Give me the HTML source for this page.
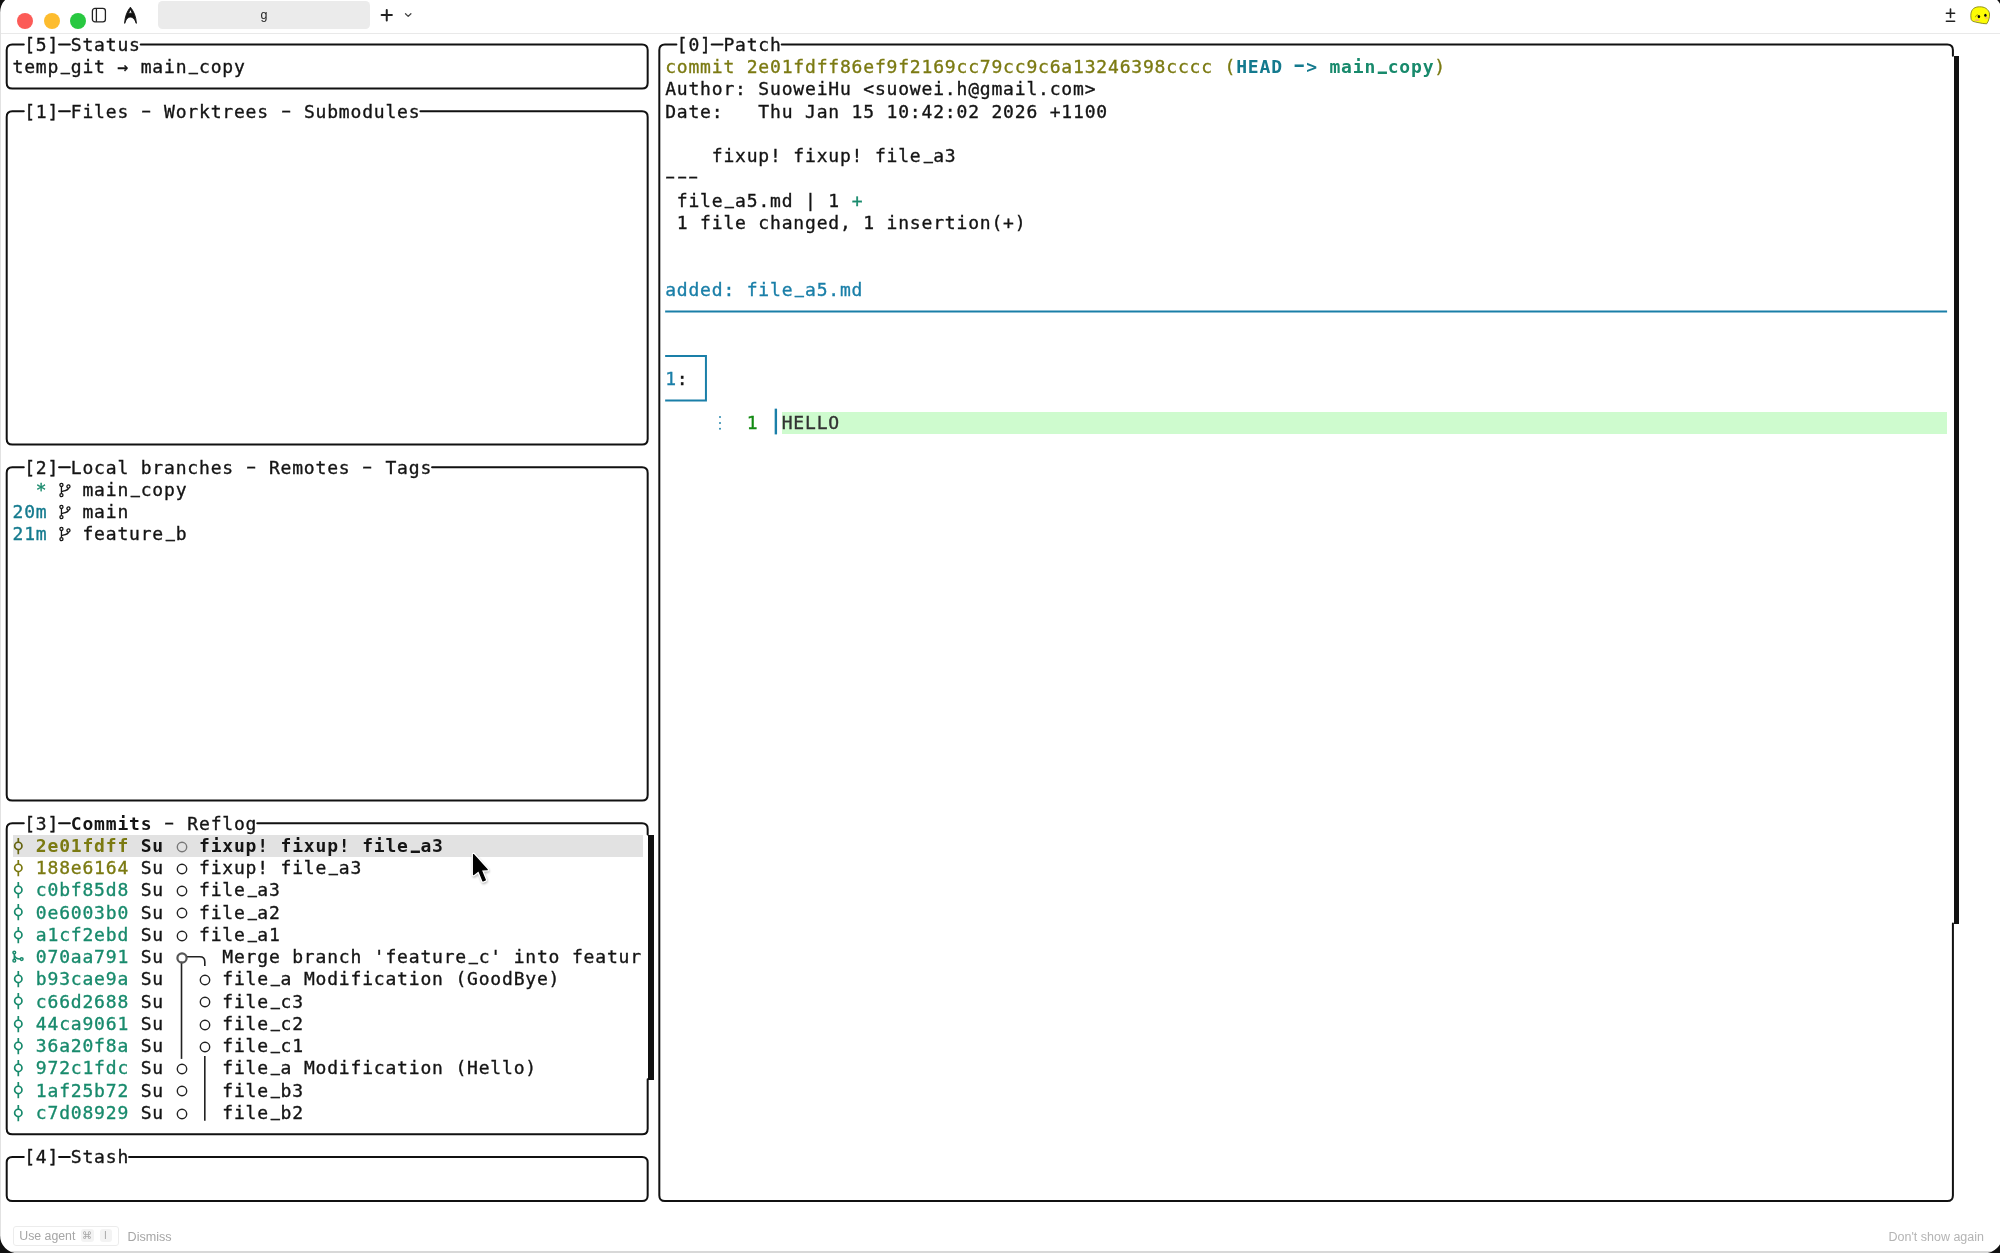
<!DOCTYPE html>
<html lang="en"><head><meta charset="utf-8"><title>g</title>
<style>
html,body{margin:0;padding:0;background:#fff}
body{width:2000px;height:1253px;position:relative;overflow:hidden;font-family:"Liberation Sans","DejaVu Sans",sans-serif}
.r{position:absolute;white-space:pre;font-family:"DejaVu Sans Mono","Liberation Mono",monospace;font-size:18px;line-height:22px;height:22px;letter-spacing:0.817px;color:#141414;-webkit-text-stroke:0.35px currentColor}
.b{font-weight:bold;-webkit-text-stroke:0}
.o{color:#7b7a12}.g{color:#188a6c}.c{color:#147a8e}.bl{color:#1a7fa8}.lg{color:#138a13}.dk{color:#333}.f{color:#141414}
.ic{position:absolute;overflow:visible}
.hy{display:inline-block;transform:translateY(-2px) scaleX(1.65)}
.us{display:inline-block;transform-origin:46% 94%;transform:translate(0.9px,-3.1px) scale(0.85,1.5)}
#lines{position:absolute;left:0;top:0}
</style></head><body>
<div id="app" style="position:absolute;left:0;top:0;width:2000px;height:1253px;will-change:transform">
<div id="titlebar" style="position:absolute;left:0;top:0;width:2000px;height:33px;background:#fff"></div>
<div style="position:absolute;left:0;top:33px;width:2000px;height:1.2px;background:#e9e9e9"></div>
<div style="position:absolute;left:17.2px;top:13.1px;width:16px;height:16px;border-radius:50%;background:#fc5b57"></div>
<div style="position:absolute;left:43.5px;top:13.1px;width:16px;height:16px;border-radius:50%;background:#fdbc2e"></div>
<div style="position:absolute;left:69.8px;top:13.1px;width:16px;height:16px;border-radius:50%;background:#28c840"></div>
<svg style="position:absolute;left:90px;top:6px" width="18" height="18" viewBox="0 0 18 18" fill="none" stroke="#222" stroke-width="1.3"><rect x="2.4" y="2.4" width="13" height="13.4" rx="2.6"/><path d="M6.4 2.4V15.8"/></svg>
<svg style="position:absolute;left:0;top:0" width="200" height="33" viewBox="0 0 200 33"><path fill="#111" stroke="#111" stroke-width="0.9" stroke-linejoin="round" fill-rule="evenodd" d="M130.4 7.2C133.2 10.6 136.2 16.4 136.3 23.4C135 19.6 133 17.1 130.4 17.1C127.8 17.1 125.8 19.6 124.7 23.4C124.8 16.4 127.6 10.6 130.4 7.2ZM130.4 9.3L128.5 13.2L132.3 13.2Z"/></svg>
<div style="position:absolute;left:158.2px;top:1.2px;width:211.5px;height:27.4px;border-radius:4.5px;background:#ebebeb"></div>
<div style="position:absolute;left:158.2px;top:1.2px;width:211.5px;height:27.4px;line-height:28px;text-align:center;font-size:12.5px;color:#222">g</div>
<svg style="position:absolute;left:378px;top:6px" width="40" height="18" viewBox="0 0 40 18" fill="none"><path d="M3.6 9H13.9M8.75 4.1V14.4" stroke="#222" stroke-width="2" stroke-linecap="round"/><path d="M27.5 7.7L30.2 10.4L32.9 7.7" stroke="#444" stroke-width="1.3" stroke-linecap="round" stroke-linejoin="round"/></svg>
<svg style="position:absolute;left:1942px;top:5px" width="18" height="20" viewBox="0 0 18 20" fill="none" stroke="#222" stroke-width="1.6" stroke-linecap="round"><path d="M4.4 8.3H12.6M8.5 4.1V12.5M4.4 16.2H12.6"/></svg>
<svg style="position:absolute;left:1968px;top:4px" width="24" height="24" viewBox="0 0 24 24"><path d="M2.8 11.75C2.8 8 4 5.6 5.75 4.4C7.5 3.2 9.5 2.8 11.7 2.8C14 2.8 16.3 3.2 18 4.4C20 5.8 21.5 7.8 21.5 10C21.6 11.5 21.5 12.8 21.15 14.2C20.7 16.3 19.9 18.2 18.7 19.8C16 19.8 13.5 19.3 11 18.75C8.8 18.3 6.8 18 5.05 17.35C3.8 16.7 3.2 15.8 3.1 14.9C2.9 13.9 2.8 12.8 2.8 11.75Z" fill="#fdfd04" stroke="#84841c" stroke-width="0.9"/><ellipse cx="10.9" cy="12.6" rx="1.25" ry="1.6" fill="#050510"/><ellipse cx="17.4" cy="11.2" rx="1.2" ry="1.5" fill="#050510"/><ellipse cx="9.2" cy="16.2" rx="2.4" ry="0.9" fill="#f6b870"/><ellipse cx="18.3" cy="13.9" rx="1.6" ry="0.9" fill="#f6b870"/><path d="M7.4 13.2C7.8 11.6 8.8 10.8 10 10.8" stroke="#8a7a10" stroke-width="0.8" fill="none"/></svg>

<svg id="lines" width="2000" height="1253" viewBox="0 0 2000 1253" fill="none">
<path d="M140.72 44.52H642.07Q647.67 44.52 647.67 50.12V82.93Q647.67 88.53 642.07 88.53H12.30Q6.70 88.53 6.70 82.93V50.12Q6.70 44.52 12.30 44.52H23.78M59.04 44.52H69.89" stroke="#111" stroke-width="2" fill="none" stroke-linecap="round"/>
<path d="M420.41 111.28H642.07Q647.67 111.28 647.67 116.88V438.92Q647.67 444.52 642.07 444.52H12.30Q6.70 444.52 6.70 438.92V116.88Q6.70 111.28 12.30 111.28H23.78M59.04 111.28H69.89" stroke="#111" stroke-width="2" fill="none" stroke-linecap="round"/>
<path d="M432.07 467.27H642.07Q647.67 467.27 647.67 472.88V794.92Q647.67 800.52 642.07 800.52H12.30Q6.70 800.52 6.70 794.92V472.88Q6.70 467.27 12.30 467.27H23.78M59.04 467.27H69.89" stroke="#111" stroke-width="2" fill="none" stroke-linecap="round"/>
<path d="M257.26 823.27H642.07Q647.67 823.27 647.67 828.88V834.40M647.67 1079.15V1128.68Q647.67 1134.28 642.07 1134.28H12.30Q6.70 1134.28 6.70 1128.68V828.88Q6.70 823.27 12.30 823.27H23.78M59.04 823.27H69.89" stroke="#111" stroke-width="2" fill="none" stroke-linecap="round"/>
<path d="M129.06 1157.03H642.07Q647.67 1157.03 647.67 1162.62V1195.43Q647.67 1201.03 642.07 1201.03H12.30Q6.70 1201.03 6.70 1195.43V1162.62Q6.70 1157.03 12.30 1157.03H23.78M59.04 1157.03H69.89" stroke="#111" stroke-width="2" fill="none" stroke-linecap="round"/>
<path d="M781.69 44.52H1947.32Q1952.91 44.52 1952.91 50.12V55.65M1952.91 923.40V1195.43Q1952.91 1201.03 1947.32 1201.03H664.92Q659.32 1201.03 659.32 1195.43V50.12Q659.32 44.52 664.92 44.52H676.40M711.66 44.52H722.52" stroke="#111" stroke-width="2" fill="none" stroke-linecap="round"/>
<path d="M186.51 956.77H199.81Q204.81 956.77 204.81 961.77V965.90" stroke="#222" stroke-width="1.6" fill="none"/>
<path d="M181.51 961.65V1058.90" stroke="#222" stroke-width="1.6"/>
<path d="M204.81 1055.90V1120.65" stroke="#222" stroke-width="1.6"/>
<path d="M665.15 311.52H1947.09" stroke="#1a7fa8" stroke-width="2"/>
<path d="M665.15 356.02H705.94V400.52H665.15" stroke="#1a7fa8" stroke-width="2" fill="none"/>
<path d="M775.86 408.65V434.40" stroke="#1a7fa8" stroke-width="2.4"/>
<circle cx="720.00" cy="417.07" r="0.95" fill="#1a7fa8"/>
<circle cx="720.00" cy="423.07" r="0.95" fill="#1a7fa8"/>
<circle cx="720.00" cy="428.77" r="0.95" fill="#1a7fa8"/>
</svg>
<div class="r" style="left:24.18px;top:34px;">[5]</div>
<div class="r" style="left:70.79px;top:34px;">Status</div>
<div class="r" style="left:12.52px;top:56px;">temp<span class="us">_</span>git → main<span class="us">_</span>copy</div>
<div class="r" style="left:24.18px;top:101px;">[1]</div>
<div class="r" style="left:70.79px;top:101px;">Files <span class="hy">-</span> Worktrees <span class="hy">-</span> Submodules</div>
<div class="r" style="left:24.18px;top:457px;">[2]</div>
<div class="r" style="left:70.79px;top:457px;">Local branches <span class="hy">-</span> Remotes <span class="hy">-</span> Tags</div>
<div style="position:absolute;left:648.37px;top:834.80px;width:5.3px;height:244.75px;background:#111"></div>
<div class="r" style="left:24.18px;top:813px;">[3]</div>
<div class="r" style="left:70.79px;top:813px;"><span class="b">Commits</span> <span class="hy">-</span> Reflog</div>
<div class="r" style="left:24.18px;top:1146px;">[4]</div>
<div class="r" style="left:70.79px;top:1146px;">Stash</div>
<div style="position:absolute;left:1953.62px;top:56.05px;width:5.3px;height:867.75px;background:#111"></div>
<div class="r" style="left:676.80px;top:34px;">[0]</div>
<div class="r" style="left:723.42px;top:34px;">Patch</div>
<div class="r" style="left:35.83px;top:479px;"><span class="g">*</span></div>
<svg class="ic" style="left:57.97px;top:480.52px" width="14" height="18" viewBox="0 0 14 18"><g fill="none" stroke="#141414" stroke-width="1.3"><circle cx="3.45" cy="3.9" r="1.55"/><circle cx="3.45" cy="14.1" r="1.55"/><circle cx="10.45" cy="5.5" r="1.55"/><path d="M3.45 5.4V12.6M10.45 7.1C10.3 9.3 7.5 9.6 3.8 10.4"/></g></svg>
<div class="r" style="left:82.45px;top:479px;">main<span class="us">_</span>copy</div>
<div class="r" style="left:12.52px;top:501px;"><span class="c">20m</span></div>
<svg class="ic" style="left:57.97px;top:502.77px" width="14" height="18" viewBox="0 0 14 18"><g fill="none" stroke="#141414" stroke-width="1.3"><circle cx="3.45" cy="3.9" r="1.55"/><circle cx="3.45" cy="14.1" r="1.55"/><circle cx="10.45" cy="5.5" r="1.55"/><path d="M3.45 5.4V12.6M10.45 7.1C10.3 9.3 7.5 9.6 3.8 10.4"/></g></svg>
<div class="r" style="left:82.45px;top:501px;">main</div>
<div class="r" style="left:12.52px;top:523px;"><span class="c">21m</span></div>
<svg class="ic" style="left:57.97px;top:525.02px" width="14" height="18" viewBox="0 0 14 18"><g fill="none" stroke="#141414" stroke-width="1.3"><circle cx="3.45" cy="3.9" r="1.55"/><circle cx="3.45" cy="14.1" r="1.55"/><circle cx="10.45" cy="5.5" r="1.55"/><path d="M3.45 5.4V12.6M10.45 7.1C10.3 9.3 7.5 9.6 3.8 10.4"/></g></svg>
<div class="r" style="left:82.45px;top:523px;">feature<span class="us">_</span>b</div>
<div style="position:absolute;left:12.52px;top:835.40px;width:630.32px;height:22.00px;background:#e2e2e2"></div>
<svg class="ic" style="left:12.35px;top:834.52px" width="12" height="22" viewBox="0 0 12 22"><g fill="none" stroke="#65640f" stroke-width="1.7"><circle cx="6.3" cy="10.9" r="3.65"/><path d="M6.3 3V7.2M6.3 14.6V19.3"/></g></svg>
<div class="r" style="left:35.83px;top:835px;"><span class="o b">2e01fdff</span></div>
<div class="r" style="left:140.72px;top:835px;"><span class="f b">Su</span></div>
<svg class="ic" style="left:175.51px;top:840.52px" width="12" height="12" viewBox="0 0 12 12"><circle cx="6" cy="6" r="4.7" fill="none" stroke="#777" stroke-width="1.4"/></svg>
<div class="r" style="left:198.99px;top:835px;"><span class="f b">fixup! fixup! file<span class="us">_</span>a3</span></div>
<svg class="ic" style="left:12.35px;top:856.77px" width="12" height="22" viewBox="0 0 12 22"><g fill="none" stroke="#7b7a12" stroke-width="1.7"><circle cx="6.3" cy="10.9" r="3.65"/><path d="M6.3 3V7.2M6.3 14.6V19.3"/></g></svg>
<div class="r" style="left:35.83px;top:857px;"><span class="o">188e6164</span></div>
<div class="r" style="left:140.72px;top:857px;"><span class="f">Su</span></div>
<svg class="ic" style="left:175.51px;top:862.77px" width="12" height="12" viewBox="0 0 12 12"><circle cx="6" cy="6" r="4.7" fill="none" stroke="#222" stroke-width="1.4"/></svg>
<div class="r" style="left:198.99px;top:857px;"><span class="f">fixup! file<span class="us">_</span>a3</span></div>
<svg class="ic" style="left:12.35px;top:879.02px" width="12" height="22" viewBox="0 0 12 22"><g fill="none" stroke="#188a6c" stroke-width="1.7"><circle cx="6.3" cy="10.9" r="3.65"/><path d="M6.3 3V7.2M6.3 14.6V19.3"/></g></svg>
<div class="r" style="left:35.83px;top:879px;"><span class="g">c0bf85d8</span></div>
<div class="r" style="left:140.72px;top:879px;"><span class="f">Su</span></div>
<svg class="ic" style="left:175.51px;top:885.02px" width="12" height="12" viewBox="0 0 12 12"><circle cx="6" cy="6" r="4.7" fill="none" stroke="#222" stroke-width="1.4"/></svg>
<div class="r" style="left:198.99px;top:879px;"><span class="f">file<span class="us">_</span>a3</span></div>
<svg class="ic" style="left:12.35px;top:901.27px" width="12" height="22" viewBox="0 0 12 22"><g fill="none" stroke="#188a6c" stroke-width="1.7"><circle cx="6.3" cy="10.9" r="3.65"/><path d="M6.3 3V7.2M6.3 14.6V19.3"/></g></svg>
<div class="r" style="left:35.83px;top:902px;"><span class="g">0e6003b0</span></div>
<div class="r" style="left:140.72px;top:902px;"><span class="f">Su</span></div>
<svg class="ic" style="left:175.51px;top:907.27px" width="12" height="12" viewBox="0 0 12 12"><circle cx="6" cy="6" r="4.7" fill="none" stroke="#222" stroke-width="1.4"/></svg>
<div class="r" style="left:198.99px;top:902px;"><span class="f">file<span class="us">_</span>a2</span></div>
<svg class="ic" style="left:12.35px;top:923.52px" width="12" height="22" viewBox="0 0 12 22"><g fill="none" stroke="#188a6c" stroke-width="1.7"><circle cx="6.3" cy="10.9" r="3.65"/><path d="M6.3 3V7.2M6.3 14.6V19.3"/></g></svg>
<div class="r" style="left:35.83px;top:924px;"><span class="g">a1cf2ebd</span></div>
<div class="r" style="left:140.72px;top:924px;"><span class="f">Su</span></div>
<svg class="ic" style="left:175.51px;top:929.52px" width="12" height="12" viewBox="0 0 12 12"><circle cx="6" cy="6" r="4.7" fill="none" stroke="#222" stroke-width="1.4"/></svg>
<div class="r" style="left:198.99px;top:924px;"><span class="f">file<span class="us">_</span>a1</span></div>
<svg class="ic" style="left:11.35px;top:945.77px" width="14" height="22" viewBox="0 0 14 22"><g fill="none" stroke="#188a6c" stroke-width="1.5"><circle cx="3.3" cy="6.6" r="1.35"/><circle cx="3.3" cy="14.7" r="1.35"/><circle cx="10.7" cy="13.1" r="1.35"/><path d="M3.3 8V13.3M3.3 8.4C3.5 11.4 6 13.1 9.3 13.1"/></g></svg>
<div class="r" style="left:35.83px;top:946px;"><span class="g">070aa791</span></div>
<div class="r" style="left:140.72px;top:946px;"><span class="f">Su</span></div>
<svg class="ic" style="left:175.51px;top:951.77px" width="12" height="12" viewBox="0 0 12 12"><circle cx="6" cy="6" r="4.6" fill="none" stroke="#555" stroke-width="2.2"/></svg>
<div class="r" style="left:222.30px;top:946px;">Merge branch &#x27;feature<span class="us">_</span>c&#x27; into featur</div>
<svg class="ic" style="left:12.35px;top:968.02px" width="12" height="22" viewBox="0 0 12 22"><g fill="none" stroke="#188a6c" stroke-width="1.7"><circle cx="6.3" cy="10.9" r="3.65"/><path d="M6.3 3V7.2M6.3 14.6V19.3"/></g></svg>
<div class="r" style="left:35.83px;top:968px;"><span class="g">b93cae9a</span></div>
<div class="r" style="left:140.72px;top:968px;"><span class="f">Su</span></div>
<svg class="ic" style="left:198.81px;top:974.02px" width="12" height="12" viewBox="0 0 12 12"><circle cx="6" cy="6" r="4.7" fill="none" stroke="#222" stroke-width="1.4"/></svg>
<div class="r" style="left:222.30px;top:968px;">file<span class="us">_</span>a Modification (GoodBye)</div>
<svg class="ic" style="left:12.35px;top:990.27px" width="12" height="22" viewBox="0 0 12 22"><g fill="none" stroke="#188a6c" stroke-width="1.7"><circle cx="6.3" cy="10.9" r="3.65"/><path d="M6.3 3V7.2M6.3 14.6V19.3"/></g></svg>
<div class="r" style="left:35.83px;top:991px;"><span class="g">c66d2688</span></div>
<div class="r" style="left:140.72px;top:991px;"><span class="f">Su</span></div>
<svg class="ic" style="left:198.81px;top:996.27px" width="12" height="12" viewBox="0 0 12 12"><circle cx="6" cy="6" r="4.7" fill="none" stroke="#222" stroke-width="1.4"/></svg>
<div class="r" style="left:222.30px;top:991px;">file<span class="us">_</span>c3</div>
<svg class="ic" style="left:12.35px;top:1012.52px" width="12" height="22" viewBox="0 0 12 22"><g fill="none" stroke="#188a6c" stroke-width="1.7"><circle cx="6.3" cy="10.9" r="3.65"/><path d="M6.3 3V7.2M6.3 14.6V19.3"/></g></svg>
<div class="r" style="left:35.83px;top:1013px;"><span class="g">44ca9061</span></div>
<div class="r" style="left:140.72px;top:1013px;"><span class="f">Su</span></div>
<svg class="ic" style="left:198.81px;top:1018.52px" width="12" height="12" viewBox="0 0 12 12"><circle cx="6" cy="6" r="4.7" fill="none" stroke="#222" stroke-width="1.4"/></svg>
<div class="r" style="left:222.30px;top:1013px;">file<span class="us">_</span>c2</div>
<svg class="ic" style="left:12.35px;top:1034.78px" width="12" height="22" viewBox="0 0 12 22"><g fill="none" stroke="#188a6c" stroke-width="1.7"><circle cx="6.3" cy="10.9" r="3.65"/><path d="M6.3 3V7.2M6.3 14.6V19.3"/></g></svg>
<div class="r" style="left:35.83px;top:1035px;"><span class="g">36a20f8a</span></div>
<div class="r" style="left:140.72px;top:1035px;"><span class="f">Su</span></div>
<svg class="ic" style="left:198.81px;top:1040.78px" width="12" height="12" viewBox="0 0 12 12"><circle cx="6" cy="6" r="4.7" fill="none" stroke="#222" stroke-width="1.4"/></svg>
<div class="r" style="left:222.30px;top:1035px;">file<span class="us">_</span>c1</div>
<svg class="ic" style="left:12.35px;top:1057.03px" width="12" height="22" viewBox="0 0 12 22"><g fill="none" stroke="#188a6c" stroke-width="1.7"><circle cx="6.3" cy="10.9" r="3.65"/><path d="M6.3 3V7.2M6.3 14.6V19.3"/></g></svg>
<div class="r" style="left:35.83px;top:1057px;"><span class="g">972c1fdc</span></div>
<div class="r" style="left:140.72px;top:1057px;"><span class="f">Su</span></div>
<svg class="ic" style="left:175.51px;top:1063.03px" width="12" height="12" viewBox="0 0 12 12"><circle cx="6" cy="6" r="4.7" fill="none" stroke="#222" stroke-width="1.4"/></svg>
<div class="r" style="left:222.30px;top:1057px;">file<span class="us">_</span>a Modification (Hello)</div>
<svg class="ic" style="left:12.35px;top:1079.28px" width="12" height="22" viewBox="0 0 12 22"><g fill="none" stroke="#188a6c" stroke-width="1.7"><circle cx="6.3" cy="10.9" r="3.65"/><path d="M6.3 3V7.2M6.3 14.6V19.3"/></g></svg>
<div class="r" style="left:35.83px;top:1080px;"><span class="g">1af25b72</span></div>
<div class="r" style="left:140.72px;top:1080px;"><span class="f">Su</span></div>
<svg class="ic" style="left:175.51px;top:1085.28px" width="12" height="12" viewBox="0 0 12 12"><circle cx="6" cy="6" r="4.7" fill="none" stroke="#222" stroke-width="1.4"/></svg>
<div class="r" style="left:222.30px;top:1080px;">file<span class="us">_</span>b3</div>
<svg class="ic" style="left:12.35px;top:1101.53px" width="12" height="22" viewBox="0 0 12 22"><g fill="none" stroke="#188a6c" stroke-width="1.7"><circle cx="6.3" cy="10.9" r="3.65"/><path d="M6.3 3V7.2M6.3 14.6V19.3"/></g></svg>
<div class="r" style="left:35.83px;top:1102px;"><span class="g">c7d08929</span></div>
<div class="r" style="left:140.72px;top:1102px;"><span class="f">Su</span></div>
<svg class="ic" style="left:175.51px;top:1107.53px" width="12" height="12" viewBox="0 0 12 12"><circle cx="6" cy="6" r="4.7" fill="none" stroke="#222" stroke-width="1.4"/></svg>
<div class="r" style="left:222.30px;top:1102px;">file<span class="us">_</span>b2</div>
<div class="r" style="left:665.15px;top:56px;"><span class="o">commit 2e01fdff86ef9f2169cc79cc9c6a13246398cccc (</span><span class="c b">HEAD <span class="hy">-</span>&gt; </span><span class="g b">main<span class="us">_</span>copy</span><span class="o">)</span></div>
<div class="r" style="left:665.15px;top:78px;">Author: SuoweiHu &lt;suowei.h@gmail.com&gt;</div>
<div class="r" style="left:665.15px;top:101px;">Date:   Thu Jan 15 10:42:02 2026 +1100</div>
<div class="r" style="left:665.15px;top:145px;">    fixup! fixup! file<span class="us">_</span>a3</div>
<div class="r" style="left:665.15px;top:167px;"><span class="hy">-</span><span class="hy">-</span><span class="hy">-</span></div>
<div class="r" style="left:665.15px;top:190px;"> file<span class="us">_</span>a5.md | 1 <span class="g">+</span></div>
<div class="r" style="left:665.15px;top:212px;"> 1 file changed, 1 insertion(+)</div>
<div class="r" style="left:665.15px;top:279px;"><span class="bl">added: file<span class="us">_</span>a5.md</span></div>
<div class="r" style="left:665.15px;top:368px;"><span class="bl">1</span>:</div>
<div style="position:absolute;left:781.69px;top:411.65px;width:1165.40px;height:22.25px;background:#cefbce"></div>
<div class="r" style="left:746.73px;top:412px;"><span class="lg">1</span></div>
<div class="r" style="left:781.69px;top:412px;"><span class="dk">HELLO</span></div>
<div style="position:absolute;left:12.5px;top:1226px;width:106px;height:19.5px;border:1px solid #ececec;border-radius:3px;box-sizing:border-box"></div>
<div style="position:absolute;left:19.3px;top:1227px;height:19px;line-height:19px;font-size:12.3px;color:#a6a6a6;white-space:pre">Use agent</div>
<div style="position:absolute;left:80.5px;top:1229px;width:13px;height:13px;border-radius:3px;background:#f3f3f3"></div>
<div style="position:absolute;left:99.5px;top:1229px;width:12px;height:13px;border-radius:3px;background:#f3f3f3"></div>
<div style="position:absolute;left:80.5px;top:1229px;width:13px;height:13px;line-height:13px;text-align:center;font-size:10px;color:#a6a6a6;font-family:'DejaVu Sans',sans-serif">⌘</div>
<div style="position:absolute;left:99.5px;top:1229px;width:12px;height:13px;line-height:13px;text-align:center;font-size:10px;color:#a6a6a6">I</div>
<div style="position:absolute;left:127.6px;top:1228px;height:19px;line-height:19px;font-size:12.6px;color:#a6a6a6;white-space:pre">Dismiss</div>
<div style="position:absolute;right:16px;top:1228px;height:19px;line-height:19px;font-size:12.5px;color:#b4b4b4;white-space:pre">Don't show again</div>
<div style="position:absolute;left:0;top:0;width:1.2px;height:1253px;background:#e2e2e2"></div>
<div style="position:absolute;left:0;top:1251.3px;width:2000px;height:1.7px;background:#d8d8d8"></div>
<svg style="position:absolute;left:0;top:0" width="2000" height="1253" viewBox="0 0 2000 1253"><path fill="#111" fill-rule="evenodd" d="M-10 -10H2010V1263H-10Z M17.7 -5.3H1984.5A17.7 17.7 0 0 1 2002.2 12.4V1235.6A17.7 17.7 0 0 1 1984.5 1253.3H17.7A17.7 17.7 0 0 1 0.0 1235.6V12.4A17.7 17.7 0 0 1 17.7 -5.3Z"/></svg>
<svg style="position:absolute;left:460px;top:840px;overflow:visible" width="40" height="50" viewBox="460 840 40 50"><defs><filter id="cs" x="-50%" y="-50%" width="200%" height="200%"><feGaussianBlur stdDeviation="0.9"/></filter></defs><path d="M473.6 854.6V874.6L478.7 870.6L483 880.9L485.3 879.9L481.2 869.9L487.2 869.7Z" transform="translate(0.6 1.4)" fill="#000" stroke="#000" stroke-width="3.6" stroke-linejoin="round" opacity="0.28" filter="url(#cs)"/><path d="M473.6 854.6V874.6L478.7 870.6L483 880.9L485.3 879.9L481.2 869.9L487.2 869.7Z" fill="#fff" stroke="#fff" stroke-width="3.8" stroke-linejoin="round"/><path d="M473.6 854.6V874.6L478.7 870.6L483 880.9L485.3 879.9L481.2 869.9L487.2 869.7Z" fill="#000" stroke="#000" stroke-width="1.3" stroke-linejoin="round"/></svg>

</div>
</body></html>
